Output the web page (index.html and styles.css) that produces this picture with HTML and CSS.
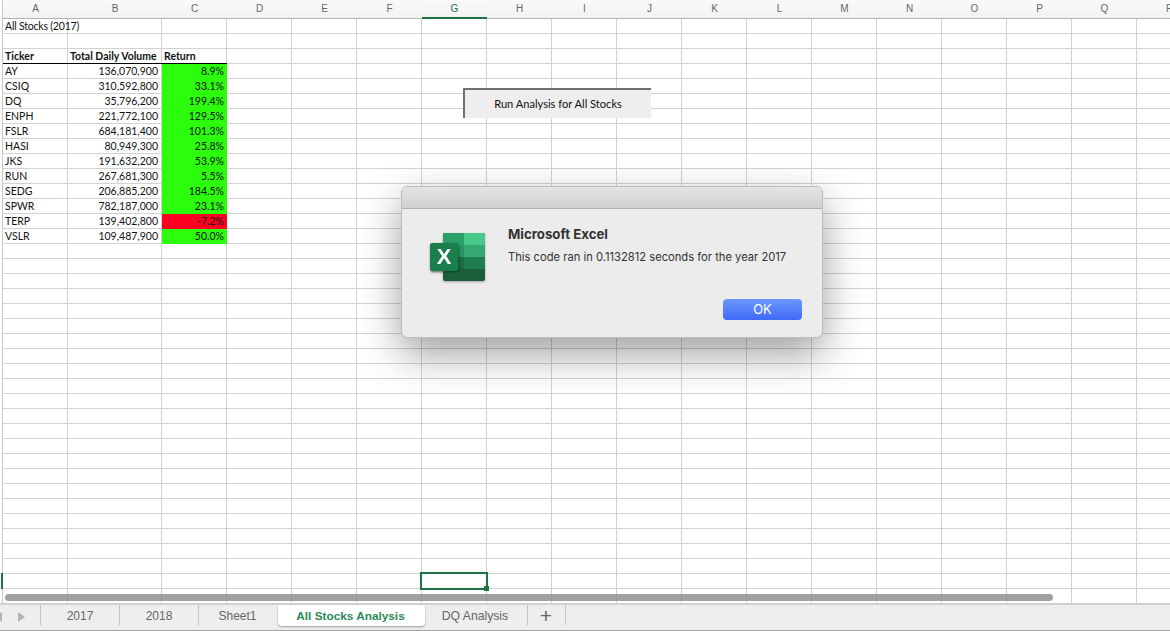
FILE: index.html

```html
<!DOCTYPE html>
<html lang="en">
<head>
  <meta charset="UTF-8">
  <title>All Stocks Analysis</title>
  <link rel="stylesheet" href="styles.css">
</head>
<body>
  <div class="sheet">
    <div class="gutter"><span class="row-mark"></span></div>

    <div class="col">
      <div class="head">A</div>
      <div class="cell title">All Stocks (2017)</div>
      <div class="cell"></div>
      <div class="cell bold under">Ticker</div>
      <div class="cell">AY</div>
      <div class="cell">CSIQ</div>
      <div class="cell">DQ</div>
      <div class="cell">ENPH</div>
      <div class="cell">FSLR</div>
      <div class="cell">HASI</div>
      <div class="cell">JKS</div>
      <div class="cell">RUN</div>
      <div class="cell">SEDG</div>
      <div class="cell">SPWR</div>
      <div class="cell">TERP</div>
      <div class="cell">VSLR</div>
    </div>

    <div class="col wide">
      <div class="head">B</div>
      <div class="cell"></div>
      <div class="cell"></div>
      <div class="cell bold under">Total Daily Volume</div>
      <div class="cell num">136,070,900</div>
      <div class="cell num">310,592,800</div>
      <div class="cell num">35,796,200</div>
      <div class="cell num">221,772,100</div>
      <div class="cell num">684,181,400</div>
      <div class="cell num">80,949,300</div>
      <div class="cell num">191,632,200</div>
      <div class="cell num">267,681,300</div>
      <div class="cell num">206,885,200</div>
      <div class="cell num">782,187,000</div>
      <div class="cell num">139,402,800</div>
      <div class="cell num">109,487,900</div>
    </div>

    <div class="col">
      <div class="head">C</div>
      <div class="cell"></div>
      <div class="cell"></div>
      <div class="cell bold under">Return</div>
      <div class="cell num up">8.9%</div>
      <div class="cell num up">33.1%</div>
      <div class="cell num up">199.4%</div>
      <div class="cell num up">129.5%</div>
      <div class="cell num up">101.3%</div>
      <div class="cell num up">25.8%</div>
      <div class="cell num up">53.9%</div>
      <div class="cell num up">5.5%</div>
      <div class="cell num up">184.5%</div>
      <div class="cell num up">23.1%</div>
      <div class="cell num down">-7.2%</div>
      <div class="cell num up">50.0%</div>
    </div>

    <div class="col"><div class="head">D</div></div>
    <div class="col"><div class="head">E</div></div>
    <div class="col"><div class="head">F</div></div>
    <div class="col"><div class="head active">G</div></div>
    <div class="col"><div class="head">H</div></div>
    <div class="col"><div class="head">I</div></div>
    <div class="col"><div class="head">J</div></div>
    <div class="col"><div class="head">K</div></div>
    <div class="col"><div class="head">L</div></div>
    <div class="col"><div class="head">M</div></div>
    <div class="col"><div class="head">N</div></div>
    <div class="col"><div class="head">O</div></div>
    <div class="col"><div class="head">P</div></div>
    <div class="col"><div class="head">Q</div></div>
    <div class="col"><div class="head">R</div></div>

    <button class="macro-btn">Run Analysis for All Stocks</button>
    <div class="selection"></div>
    <div class="scrollbar"></div>

    <div class="dialog">
      <div class="dialog-title"></div>
      <div class="dialog-body">
        <svg class="xl-icon" width="56" height="49" viewBox="0 0 56 49">
          <rect x="13" y="0" width="42" height="48" rx="2" fill="#1c5d3b"/>
          <path d="M15 0h19v12H13V2a2 2 0 0 1 2-2z" fill="#28a067"/>
          <path d="M34 0h19a2 2 0 0 1 2 2v10H34z" fill="#48c98a"/>
          <rect x="13" y="12" width="21" height="12" fill="#259461"/>
          <rect x="34" y="12" width="21" height="12" fill="#35a872"/>
          <rect x="13" y="24" width="21" height="12" fill="#1b6b43"/>
          <rect x="34" y="24" width="21" height="12" fill="#1f7e4d"/>
          <rect x="0" y="10" width="28" height="28" rx="2" fill="#1a7f4b" class="xl-front"/>
          <text x="14" y="31" class="xl-letter">X</text>
        </svg>
        <div class="dialog-text">
          <h1>Microsoft Excel</h1>
          <p>This code ran in 0.1132812 seconds for the year 2017</p>
          <button class="ok-btn">OK</button>
        </div>
      </div>
    </div>
  </div>

  <div class="tabbar">
    <div class="tab-nav">
      <span class="arrow left"></span>
      <span class="arrow right"></span>
    </div>
    <div class="tab t2017">2017</div>
    <div class="tab t2018">2018</div>
    <div class="tab sheet1">Sheet1</div>
    <div class="tab current">All Stocks Analysis</div>
    <div class="tab dq">DQ Analysis</div>
    <div class="tab add">+</div>
  </div>
</body>
</html>
```

FILE: styles.css

```css
html, body {
  margin: 0;
  height: 631px;
  overflow: hidden;
  background: white;
}

.sheet {
  position: relative;
  display: flex;
  height: 603px;
  overflow: hidden;
  font-family: Lato, sans-serif;
  font-size: 10.5px;
  color: #111;
}

.gutter {
  position: relative;
  flex: none;
  width: 2px;
  border-right: 1px solid #c8c8c8;
  background: white;
}

.row-mark {
  position: absolute;
  left: 1px;
  top: 573px;
  width: 2px;
  height: 16px;
  background: #1f7244;
}

.col {
  flex: none;
  box-sizing: border-box;
  width: 65px;
  border-right: 1px solid #d2d2d2;
  background: repeating-linear-gradient(to bottom, transparent 0 14px, #d2d2d2 14px 15px) 0 19px no-repeat;
}

.col.wide {
  width: 94px;
}

.head {
  box-sizing: border-box;
  height: 19px;
  line-height: 15px;
  padding-top: 1px;
  margin-right: -1px;
  text-align: center;
  font-family: "Liberation Sans", sans-serif;
  font-size: 10px;
  color: #666;
  background: linear-gradient(#fafafa, #f2f2f2);
  border-bottom: 1px solid #b4b4b4;
}

.head.active {
  color: #1f7244;
  border-bottom: 2px solid #1f7244;
}

.cell {
  box-sizing: border-box;
  height: 15px;
  line-height: 15px;
  padding: 0 2px;
  white-space: nowrap;
}

.title {
  letter-spacing: -0.2px;
}

.bold {
  font-weight: bold;
}

.under {
  border-bottom: 1px solid #000;
  margin-right: -1px;
}

.num {
  text-align: right;
  padding-right: 3px;
}

.up {
  background: #2bfd0c;
  margin-right: -1px;
}

.down {
  background: #fc0024;
  margin-right: -1px;
}

.macro-btn {
  position: absolute;
  left: 463px;
  top: 88px;
  box-sizing: border-box;
  width: 188px;
  height: 30px;
  padding: 0 0 2px;
  border: none;
  border-top: 2px solid #707070;
  border-left: 2px solid #707070;
  background: #eeeeee;
  font-family: Lato, sans-serif;
  font-size: 11.1px;
  color: #111;
}

.selection {
  position: absolute;
  left: 420px;
  top: 572px;
  box-sizing: border-box;
  width: 68px;
  height: 18px;
  border: 2px solid #1f7244;
}

.selection::after {
  content: "";
  position: absolute;
  right: -3px;
  bottom: -3px;
  width: 5px;
  height: 5px;
  background: #1f7244;
}

.scrollbar {
  position: absolute;
  left: 5px;
  top: 594px;
  width: 1048px;
  height: 7px;
  border-radius: 4px;
  background: rgba(140, 140, 140, 0.82);
}

.dialog {
  position: absolute;
  left: 401px;
  top: 186px;
  box-sizing: border-box;
  width: 422px;
  height: 152px;
  border: 1px solid #bcbcbc;
  border-radius: 6px;
  background: #ececec;
  box-shadow: 0 16px 40px rgba(0, 0, 0, 0.38);
  font-family: Inter, sans-serif;
  color: #333;
}

.dialog-title {
  height: 21px;
  border-radius: 5px 5px 0 0;
  border-bottom: 1px solid #b0b0b0;
  background: linear-gradient(#e4e4e4, #d0d0d0);
}

.dialog-body {
  display: flex;
  padding: 24px 20px 0 28px;
}

.xl-icon {
  flex: none;
  margin-right: 22px;
  overflow: visible;
  filter: drop-shadow(0 1px 1px rgba(0, 0, 0, 0.3));
}

.xl-front {
  filter: drop-shadow(1px 1px 1px rgba(0, 0, 0, 0.35));
}

.xl-letter {
  font-family: "Liberation Sans", sans-serif;
  font-size: 22px;
  font-weight: bold;
  fill: white;
  text-anchor: middle;
}

.dialog-text {
  flex: 1;
  display: flex;
  flex-direction: column;
  margin-top: -7px;
}

.dialog-text h1 {
  margin: 0;
  font-size: 13.25px;
  line-height: 16px;
  font-weight: 700;
}

.dialog-text p {
  margin: 7px 0 0;
  font-size: 11.2px;
  line-height: 16px;
}

.ok-btn {
  align-self: flex-end;
  width: 79px;
  height: 21px;
  margin-top: 34px;
  padding: 0 0 1px;
  border: none;
  border-radius: 4px;
  background: linear-gradient(#6e97fb, #3f69f8);
  color: white;
  font-family: Inter, sans-serif;
  font-size: 13px;
}

.tabbar {
  box-sizing: border-box;
  display: flex;
  height: 28px;
  border-top: 2px solid #d0d0d0;
  border-bottom: 1px solid #a4a4a4;
  background: #eeeeee;
  font-family: "Liberation Sans", sans-serif;
  font-size: 12px;
  color: #666;
}

.tab-nav {
  display: flex;
  align-items: center;
  justify-content: space-between;
  box-sizing: border-box;
  width: 41px;
  height: 20px;
  padding: 3px 15px 0 0;
  border-right: 1px solid #c4c4c4;
}

.arrow {
  width: 0;
  height: 0;
  border-top: 5px solid transparent;
  border-bottom: 5px solid transparent;
}

.arrow.left {
  margin-left: -5px;
  border-right: 7px solid #b4b4b4;
}

.arrow.right {
  border-left: 7px solid #b4b4b4;
}

.tab {
  box-sizing: border-box;
  height: 20px;
  line-height: 22px;
  text-align: center;
  border-right: 1px solid #c4c4c4;
}

.t2017,
.t2018 {
  width: 79px;
}

.sheet1 {
  width: 79px;
  padding-right: 2px;
  border-right: none;
}

.tab.current {
  width: 147px;
  height: 21px;
  padding-right: 2px;
  border-right: none;
  border-radius: 0 0 4px 4px;
  background: white;
  box-shadow: 0 1px 2px rgba(0, 0, 0, 0.35);
  color: #2a8a57;
  font-size: 11.8px;
  font-weight: bold;
}

.dq {
  width: 103px;
  padding-right: 2px;
  font-size: 12.2px;
}

.add {
  width: 38px;
  font-size: 21px;
  padding-right: 1px;
}
```
